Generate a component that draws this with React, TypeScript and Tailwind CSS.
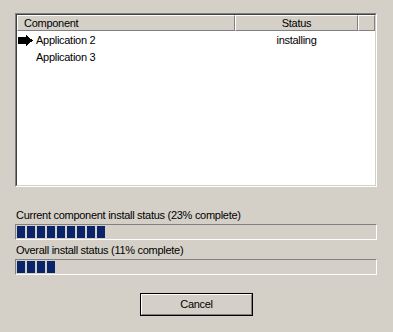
import React from "react";

const font = { fontFamily: '"Liberation Sans", Arial, sans-serif' };

const Arrow = () => (
  <svg width="15" height="11" viewBox="0 0 15 11" className="block" shapeRendering="crispEdges">
    <polygon points="0,2 8,2 8,0 15,5.5 8,11 8,9 0,9" fill="#000" />
  </svg>
);

const HeaderCell = ({
  children,
  className,
}: {
  children?: React.ReactNode;
  className?: string;
}) => (
  <div
    className={
      "h-full bg-[#d4d0c8] border-t border-l border-white border-r border-b border-r-[#808080] border-b-[#808080] flex items-center " +
      (className ?? "")
    }
  >
    {children}
  </div>
);

const Progress = ({ blocks }: { blocks: number }) => (
  <div className="w-[362px] h-4 bg-[#d4d0c8] border-t border-l border-[#808080] border-r border-b border-r-white border-b-white pl-px pt-px">
    <div className="flex gap-[2px]">
      {Array.from({ length: blocks }).map((_, i) => (
        <div key={i} className="w-2 h-3 bg-[#0a246a]" />
      ))}
    </div>
  </div>
);

const rows = [
  { name: "Application 2", status: "installing", current: true },
  { name: "Application 3", status: "", current: false },
];

export default function App() {
  return (
    <div
      className="w-[393px] h-[332px] bg-[#d4d0c8] px-[15px] pt-[13px] text-[11px] text-black tracking-[-0.28px]"
      style={font}
    >
      <div className="w-[362px] h-[174px] border-t border-l border-[#808080] border-r border-b border-r-white border-b-white">
        <div className="h-full bg-white border-t border-l border-[#404040] border-r border-b border-r-[#d4d0c8] border-b-[#d4d0c8]">
          <div className="flex h-4">
            <HeaderCell className="w-[218px] pl-[6px]">Component</HeaderCell>
            <HeaderCell className="w-[123px] justify-center">Status</HeaderCell>
            <HeaderCell className="flex-1" />
          </div>
          <div className="pt-px">
            {rows.map((r) => (
              <div key={r.name} className="flex h-[17px] leading-[17px]">
                <div className="w-[218px] flex items-center pl-px">
                  <div className="w-[18px]">{r.current && <Arrow />}</div>
                  <span>{r.name}</span>
                </div>
                <div className="w-[123px] text-center">{r.status}</div>
              </div>
            ))}
          </div>
        </div>
      </div>

      <div className="mt-[22px] h-[13px] leading-[13px] pl-px">
        Current component install status (23% complete)
      </div>
      <div className="mt-[2px]">
        <Progress blocks={9} />
      </div>
      <div className="mt-[3px] h-[15px] leading-[15px] pl-px">
        Overall install status (11% complete)
      </div>
      <div className="mt-[1px]">
        <Progress blocks={4} />
      </div>

      <div className="mt-[18px] flex justify-center">
        <button className="w-[113px] h-[23px] border border-black bg-[#d4d0c8] p-0">
          <div className="h-full border-t border-l border-white border-r border-b border-r-[#808080] border-b-[#808080] flex items-center justify-center">
            Cancel
          </div>
        </button>
      </div>
    </div>
  );
}
